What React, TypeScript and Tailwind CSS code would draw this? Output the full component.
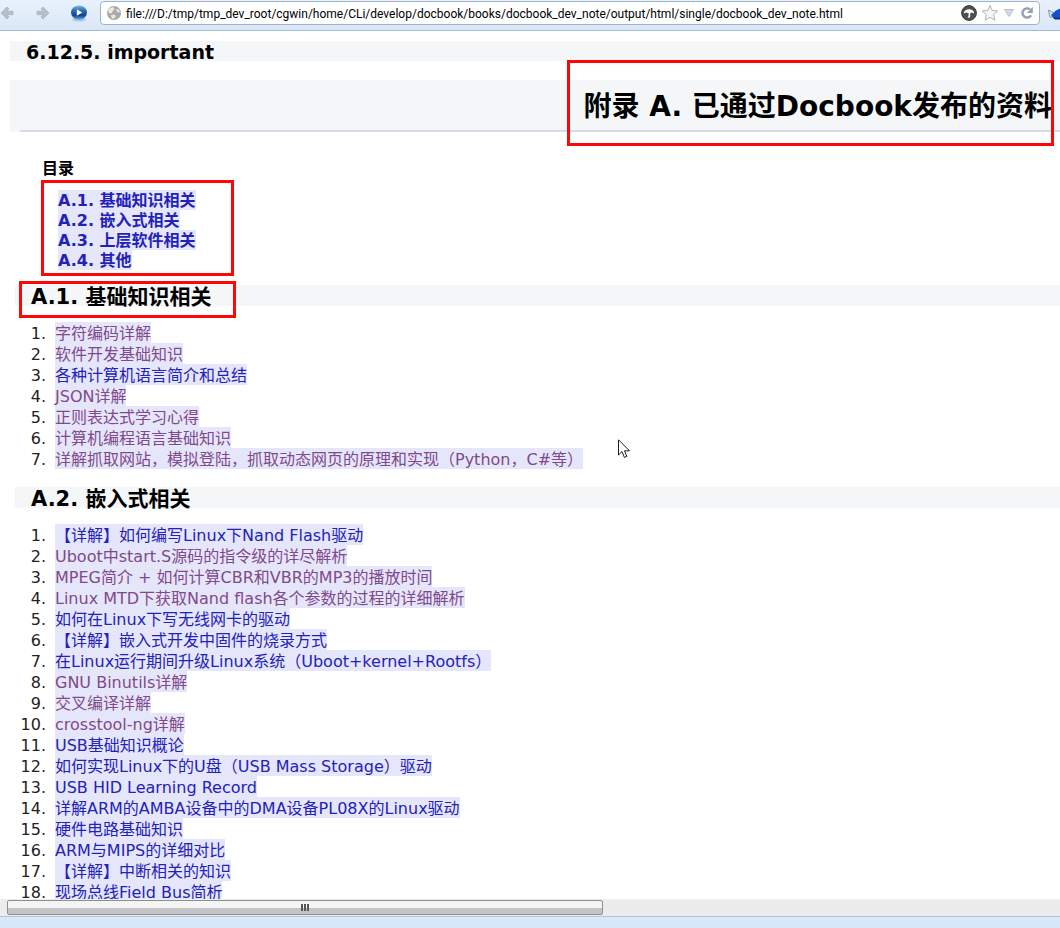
import React from 'react';

interface Entry {
  text: string;
  visited?: boolean;
}

const toc: string[] = ['A.1. 基础知识相关', 'A.2. 嵌入式相关', 'A.3. 上层软件相关', 'A.4. 其他'];

const basics: Entry[] = [
  { text: '字符编码详解', visited: true },
  { text: '软件开发基础知识', visited: true },
  { text: '各种计算机语言简介和总结' },
  { text: 'JSON详解', visited: true },
  { text: '正则表达式学习心得', visited: true },
  { text: '计算机编程语言基础知识', visited: true },
  { text: '详解抓取网站，模拟登陆，抓取动态网页的原理和实现（Python，C#等）', visited: true },
];

const embedded: Entry[] = [
  { text: '【详解】如何编写Linux下Nand Flash驱动' },
  { text: 'Uboot中start.S源码的指令级的详尽解析', visited: true },
  { text: 'MPEG简介 + 如何计算CBR和VBR的MP3的播放时间', visited: true },
  { text: 'Linux MTD下获取Nand flash各个参数的过程的详细解析', visited: true },
  { text: '如何在Linux下写无线网卡的驱动' },
  { text: '【详解】嵌入式开发中固件的烧录方式' },
  { text: '在Linux运行期间升级Linux系统（Uboot+kernel+Rootfs）' },
  { text: 'GNU Binutils详解', visited: true },
  { text: '交叉编译详解', visited: true },
  { text: 'crosstool-ng详解', visited: true },
  { text: 'USB基础知识概论' },
  { text: '如何实现Linux下的U盘（USB Mass Storage）驱动' },
  { text: 'USB HID Learning Record' },
  { text: '详解ARM的AMBA设备中的DMA设备PL08X的Linux驱动' },
  { text: '硬件电路基础知识' },
  { text: 'ARM与MIPS的详细对比' },
  { text: '【详解】中断相关的知识' },
  { text: '现场总线Field Bus简析' },
];

const ArrowIcon: React.FC<{ flip?: boolean }> = ({ flip }) => (
  <svg className={flip ? 'h-4 w-4 rotate-180' : 'h-4 w-4'} viewBox="0 0 16 16">
    <path
      d="M1 8L7 2L9 4L6.8 6.3H13V9.7H6.8L9 12L7 14z"
      fill="#b7bfc8"
      stroke="#a9b3be"
      strokeWidth="0.8"
      strokeLinejoin="round"
    />
  </svg>
);

const Toolbar: React.FC = () => (
  <header className="flex h-[31px] shrink-0 items-start overflow-hidden border-b border-[#a3bbd3] bg-linear-to-b from-[#e9f2fc] to-[#d9e7f7] pt-px">
    <div className="flex h-6 w-[100px] shrink-0 items-center">
      <button type="button" aria-label="Back" className="w-[34px]">
        <ArrowIcon />
      </button>
      <button type="button" aria-label="Forward" className="w-9">
        <ArrowIcon flip />
      </button>
      <button type="button" aria-label="Play">
        <svg className="h-[18px] w-[18px]" viewBox="0 0 18 18">
          <defs>
            <linearGradient id="ball" x1="0" y1="0" x2="0" y2="1">
              <stop offset="0" stopColor="#8ab6e4" />
              <stop offset="0.35" stopColor="#2b6cb4" />
              <stop offset="0.7" stopColor="#12488f" />
              <stop offset="1" stopColor="#5fb2ee" />
            </linearGradient>
          </defs>
          <ellipse cx="9" cy="15.6" rx="7" ry="2" fill="#b4c8de" />
          <ellipse cx="9" cy="8.6" rx="8" ry="7.2" fill="url(#ball)" />
          <path d="M6.8 5.2L12.2 8.5L6.8 11.8z" fill="#fff" />
        </svg>
      </button>
    </div>
    <div className="flex h-6 min-w-0 flex-1 items-center gap-1 rounded-sm border border-[#9fb4ca] bg-white px-1">
      <svg className="ml-px h-4 w-4 shrink-0" viewBox="0 0 16 16">
        <circle cx="8" cy="8" r="7" fill="#a9a9a9" />
        <path d="M3 3.5L7.5 2L8.5 4.5L6.5 6L6 8L3.5 8.5L2 6zM10 4L13 4.5L14 7L11.5 7.5zM5 10L8.5 9.5L10 11.5L7.5 14L5.5 13z" fill="#e8e8e8" />
      </svg>
      <input
        type="text"
        aria-label="Address"
        readOnly
        className="min-w-0 flex-1 bg-transparent pt-px font-[Roboto,sans-serif] text-xs text-black outline-none"
        value="file:///D:/tmp/tmp_dev_root/cgwin/home/CLi/develop/docbook/books/docbook_dev_note/output/html/single/docbook_dev_note.html"
      />
      <button type="button" aria-label="Umbrella">
        <svg className="h-4 w-4" viewBox="0 0 16 16">
          <circle cx="8" cy="8" r="7.4" fill="#505050" stroke="#3a3a3a" />
          <path d="M2.8 8.4C3.2 2.8 12.8 2.8 13.2 8.4L10.8 7.6L9.2 8.2V11.6Q9 13.2 6.8 12.4V11.4H7.6V8.2L5.2 7.6z" fill="#fff" />
        </svg>
      </button>
      <button type="button" aria-label="Bookmark">
        <svg className="h-[18px] w-[18px]" viewBox="0 0 18 18">
          <path
            d="M9 1.4L11.2 6.5L16.8 7L12.6 10.7L13.9 16.2L9 13.3L4.1 16.2L5.4 10.7L1.2 7L6.8 6.5z"
            fill="#f6f6f6"
            stroke="#aeb2b6"
          />
        </svg>
      </button>
      <button type="button" aria-label="History">
        <svg className="h-3 w-3" viewBox="0 0 12 12">
          <path d="M1.5 2.5H10.5L6 9.5z" fill="#d3dce4" stroke="#b5bfc9" />
        </svg>
      </button>
      <button type="button" aria-label="Reload">
        <svg className="h-4 w-4" viewBox="0 0 16 16">
          <path d="M11 4.4A4.6 4.6 0 1 0 12 10.4" fill="none" stroke="#94a1ae" strokeWidth="2.4" />
          <path d="M13.8 1.8V8H7.8z" fill="#94a1ae" />
        </svg>
      </button>
    </div>
    <button type="button" aria-label="Extension" className="ml-2 mt-1 w-3 shrink-0 overflow-hidden">
      <svg className="h-4 w-6" viewBox="0 0 24 16">
        <path d="M0.5 5L6 8L3 13L1.5 11z" fill="#dfe3e8" stroke="#8b95a3" />
        <path d="M3 10L8 5.5L12 3.5H16V14H6z" fill="#1450cf" />
        <path d="M5 12.5H16V14.5H7z" fill="#0a2e88" />
      </svg>
    </button>
  </header>
);

// red frame drawn over a part of the page
const Mark: React.FC<{ className: string }> = ({ className }) => (
  <div className={`pointer-events-none absolute border-3 border-[#ff0505] ${className}`} />
);

const EntryList: React.FC<{ items: Entry[] }> = ({ items }) => (
  <ol className="pt-4 leading-[23px]">
    {items.map((item, i) => (
      <li key={item.text} className="flex h-[21px]">
        <span className="w-[55px] shrink-0 pr-[9px] text-right text-[#222]">{i + 1}.</span>
        <a
          href="#"
          className={`whitespace-nowrap bg-[#e6e6fa] ${item.visited ? 'text-[#7f4a8c]' : 'text-[#2222bb]'}`}
        >
          {item.text}
        </a>
      </li>
    ))}
  </ol>
);

const App: React.FC = () => (
  <div className="flex h-screen flex-col overflow-hidden bg-white font-['DejaVu_Sans','Noto_Sans_CJK_SC',sans-serif] text-base text-black">
    <Toolbar />

    <main className="min-h-0 flex-1 overflow-hidden pt-2.5">
      <h3 className="ml-2.5 h-5 bg-[#f5f6f8] pl-4 text-[19px] font-bold leading-[22px]">6.12.5. important</h3>

      <div className="relative ml-2.5 mt-[19px] bg-[#f5f6f8] pl-2.5">
        <h1 className="whitespace-nowrap border-b-2 border-[#d9dbec] pr-2 pt-1 text-right text-[28px] font-bold leading-[46px]">
          附录 A. 已通过Docbook发布的资料
        </h1>
        <Mark className="-bottom-3.5 -top-5 right-1.5 w-[487px]" />
      </div>

      <nav className="pl-[42px] pt-[26px] font-bold">
        <p className="h-5 leading-[22px]">目录</p>
        <div className="relative mt-3 w-48 pl-4">
          {toc.map((title) => (
            <div key={title} className="flex h-5 leading-[22px]">
              <a href="#" className="bg-[#e6e6fa] text-[#2222bb]">
                {title}
              </a>
            </div>
          ))}
          <Mark className="-bottom-1.5 -left-px -top-2.5 right-0" />
        </div>
      </nav>

      <section className="pt-[15px]">
        <div className="relative ml-[15px] bg-[#f5f6f8] pl-4">
          <h2 className="h-[21px] text-[21px] font-bold leading-[25px]">A.1. 基础知识相关</h2>
          <Mark className="-bottom-3 -top-1 left-1 w-[217px]" />
        </div>
        <EntryList items={basics} />
      </section>

      <section className="pt-[18px]">
        <h2 className="ml-[15px] h-[21px] bg-[#f5f6f8] pl-4 text-[21px] font-bold leading-[25px]">A.2. 嵌入式相关</h2>
        <EntryList items={embedded} />
      </section>
    </main>

    <div className="flex h-[17px] shrink-0 bg-[#ececec] pb-px pl-[7px] pt-px">
      <div className="flex flex-[13] items-center justify-center gap-px rounded-xs border border-[#8f8f8f] bg-linear-to-b from-[#f4f4f4] from-50% to-[#c4c4c8] to-55%">
        <span className="h-[7px] w-0.5 bg-[#555]" />
        <span className="h-[7px] w-0.5 bg-[#555]" />
        <span className="h-[7px] w-0.5 bg-[#555]" />
      </div>
      <div className="flex-[10]" />
    </div>
    <footer className="h-3 shrink-0 border-t border-[#b3c4d6] bg-[#d9e8f8]" />

    <svg className="pointer-events-none absolute left-[618px] top-[439px] h-5 w-3" viewBox="0 0 12 20">
      <path d="M0.5 0.8V16L4 12.6L6.4 18.4L8.8 17.4L6.5 11.8H11.5z" fill="#fff" stroke="#1a1a2e" />
    </svg>
  </div>
);

export default App;
